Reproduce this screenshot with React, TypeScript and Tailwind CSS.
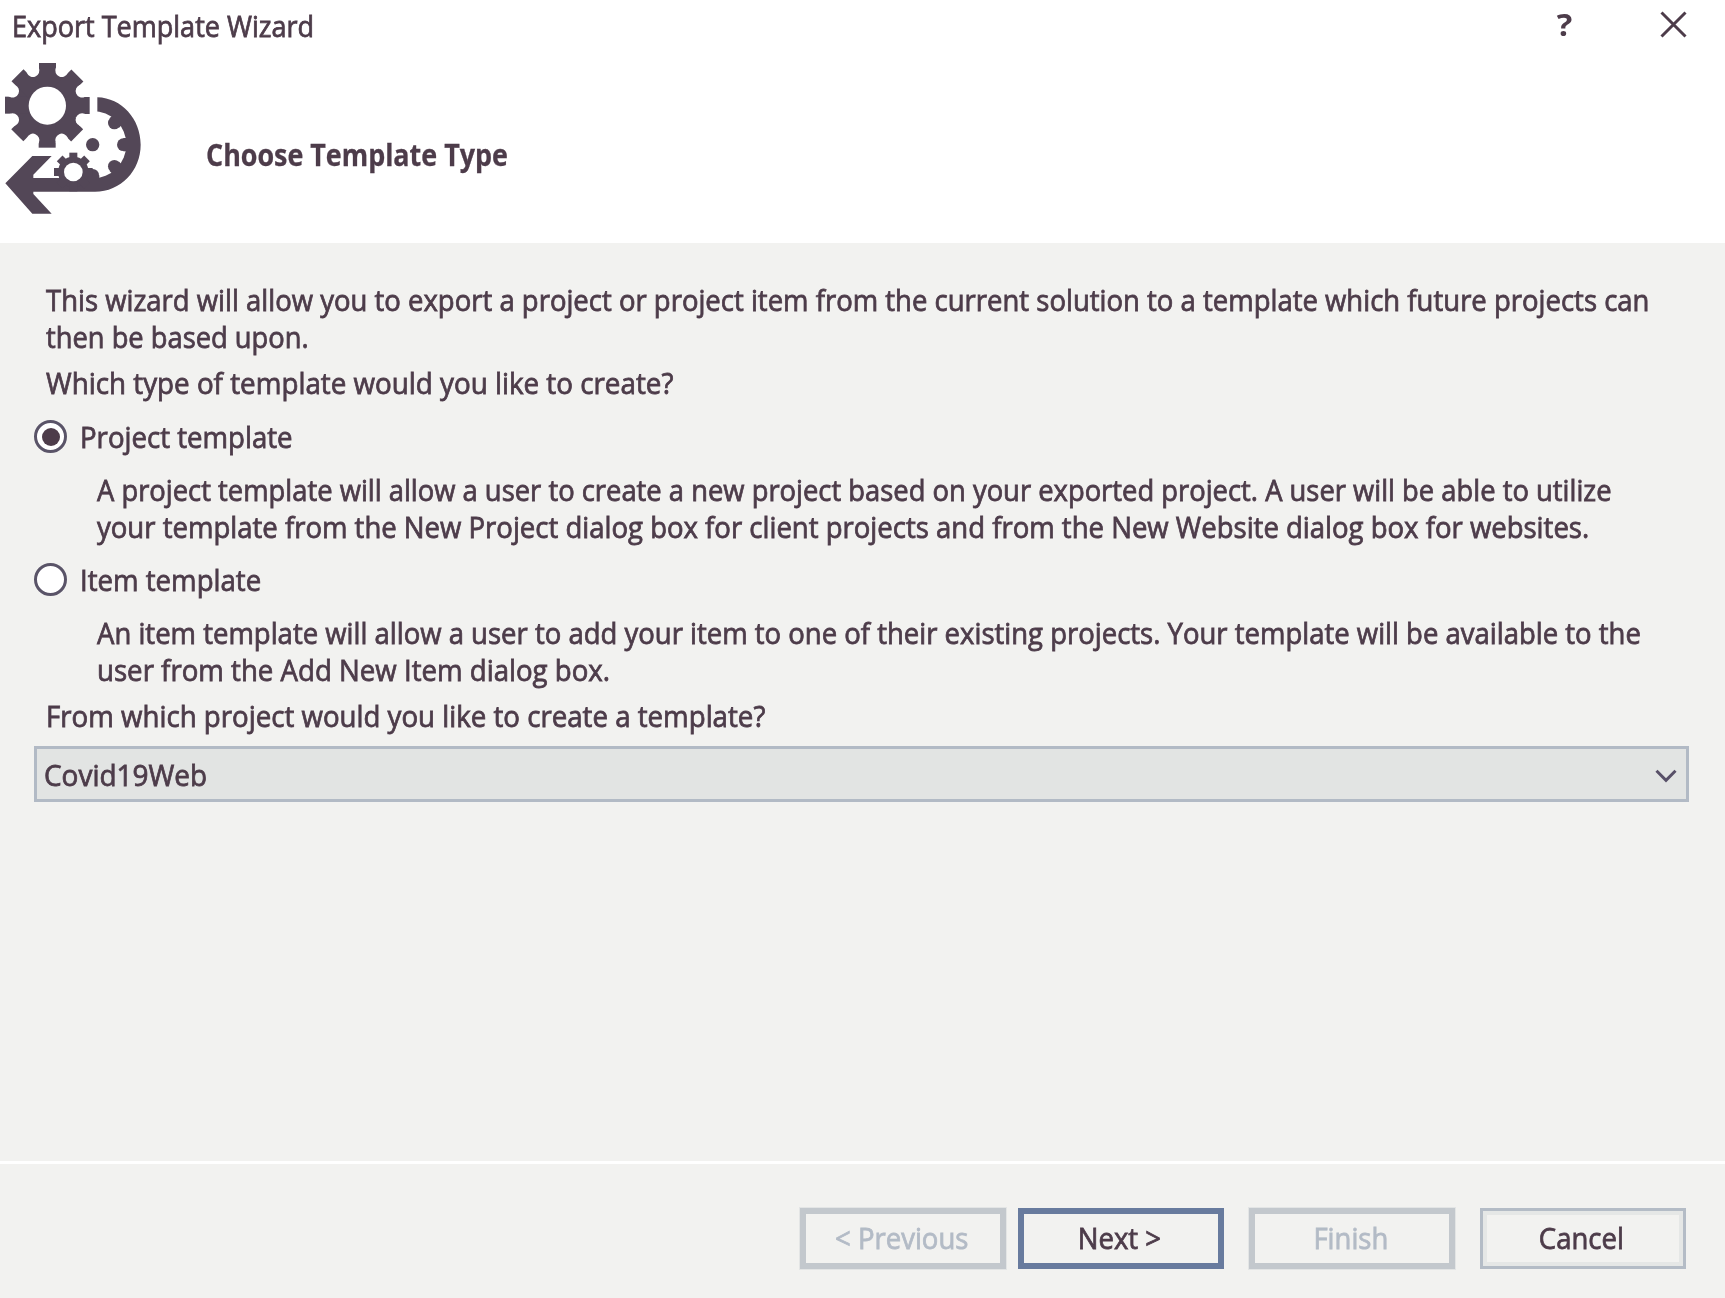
import type { ReactNode } from "react";

const INK = "#4d3c4a";

function Line({ scale = 0.917, bold = false, children }: { scale?: number; bold?: boolean; children: ReactNode }) {
  return (
    <span
      className={
        "block w-max origin-left whitespace-pre text-[30px] leading-9 " +
        (bold ? "font-bold [-webkit-text-stroke:0.3px_currentColor]" : "font-normal [-webkit-text-stroke:0.8px_currentColor]")
      }
      style={{ transform: `scaleX(${scale})` }}
    >
      {children}
    </span>
  );
}

function WizardIcon() {
  const eight = [0, 45, 90, 135, 180, 225, 270, 315];
  return (
    <svg viewBox="0 0 480 525" className="h-[175px] w-[160px] shrink-0" fill="#534757">
      <mask id="big">
        <rect width="480" height="525" fill="#fff" />
        {eight.map((a) => (
          <circle key={a} cx="142" cy="53" r="19.5" fill="#000" transform={`rotate(${a + 22.5} 142 166)`} />
        ))}
        <ellipse cx="142" cy="167" rx="56" ry="57" fill="#000" />
      </mask>
      <mask id="mid">
        <rect width="480" height="525" fill="#fff" />
        <circle cx="278" cy="284" r="101" fill="#000" />
        {[0, 45, 90, -45].map((a) => (
          <g key={a} fill="#fff" transform={`rotate(${a} 278 284)`}>
            <circle cx="370" cy="284" r="19" />
            <rect x="370" y="264" width="16" height="40" />
          </g>
        ))}
        <circle cx="142" cy="166" r="128" fill="#000" />
      </mask>
      <g mask="url(#big)">
        <circle cx="142" cy="166" r="113" />
        {eight.map((a) => (
          <rect key={a} x="117" y="39" width="51" height="70" transform={`rotate(${a} 142 166)`} />
        ))}
      </g>
      <path
        mask="url(#mid)"
        d="M292 142C365 144 422 207 422 284C422 362 362 425 285 425H100V432L155 491H97L16 400L97 318H155L100 374V384H255V350H292Z"
      />
      <circle cx="278" cy="284" r="20" />
      <circle cx="220" cy="366" r="46" />
      {eight.map((a) => (
        <rect key={a} x="208" y="308" width="24" height="30" transform={`rotate(${a} 220 366)`} />
      ))}
      <circle cx="220" cy="366" r="28" fill="#fff" />
    </svg>
  );
}

function Radio({ checked = false }: { checked?: boolean }) {
  return (
    <span className="mt-px flex size-[33px] shrink-0 items-center justify-center rounded-full border-3 border-[#5a5468] bg-white">
      {checked && <span className="size-[18px] rounded-full bg-[#4d3c4a]" />}
    </span>
  );
}

function Option({ label, scale, checked, lines }: { label: string; scale: number; checked?: boolean; lines: [string, number][] }) {
  return (
    <div>
      <div className="flex items-start">
        <Radio checked={checked} />
        <div className="ml-[13px]">
          <Line scale={scale}>{label}</Line>
        </div>
      </div>
      <div className="mt-[17px] ml-[63px] flex flex-col gap-px">
        {lines.map(([t, s]) => (
          <Line key={t} scale={s}>{t}</Line>
        ))}
      </div>
    </div>
  );
}

function Button({ kind, children }: { kind: "disabled" | "default" | "normal"; children: string }) {
  const look = {
    disabled: "border-[6px] border-[#c3c8cd] text-[#b3bbc6] outline outline-1 outline-[#e3e5e5]",
    default: "border-[6px] border-[#687b9e] text-[#4d3c4a]",
    normal: "border-[3px] border-[#b4bcc6] text-[#4d3c4a] shadow-[inset_0_0_0_4px_#e5e7e6]",
  }[kind];
  return (
    <button className={"flex h-[61px] w-[206px] items-center justify-center text-[30px] leading-9 " + look}>
      <span className="mr-[3px] -mt-px block scale-x-[0.917] [-webkit-text-stroke:0.8px_currentColor]">{children}</span>
    </button>
  );
}

export default function App() {
  return (
    <div className="flex h-[1298px] w-[1725px] flex-col overflow-hidden bg-[#f2f2f0] font-['Open_Sans',sans-serif] text-[#4d3c4a]">
      <header className="h-[243px] bg-white">
        <div className="flex h-[50px] items-start justify-between pt-2 pl-3">
          <Line scale={0.901}>Export Template Wizard</Line>
          <div className="flex items-start pr-[38px]">
            <span className="-mt-[2px] mr-[88px] scale-x-[1.05] text-[31px] leading-9 font-bold">?</span>
            <svg viewBox="0 0 27 27" className="mt-[3px] size-[27px]" stroke={INK} strokeWidth="3" fill="none">
              <path d="M1.5 1.5L25.5 25.5M25.5 1.5L1.5 25.5" />
            </svg>
          </div>
        </div>
        <div className="flex">
          <WizardIcon />
          <div className="mt-[87px] ml-[46px]">
            <Line scale={0.896} bold>Choose Template Type</Line>
          </div>
        </div>
      </header>

      <main className="flex h-[918px] flex-col pt-[39px] pr-9 pl-[34px]">
        <div className="ml-3 flex flex-col gap-px">
          <Line scale={0.9165}>This wizard will allow you to export a project or project item from the current solution to a template which future projects can</Line>
          <Line scale={0.91}>then be based upon.</Line>
        </div>
        <div className="mt-2.5 ml-3">
          <Line scale={0.926}>Which type of template would you like to create?</Line>
        </div>
        <div className="mt-[18px]">
          <Option
            checked
            label="Project template"
            scale={0.92}
            lines={[
              ["A project template will allow a user to create a new project based on your exported project. A user will be able to utilize", 0.9125],
              ["your template from the New Project dialog box for client projects and from the New Website dialog box for websites.", 0.9175],
            ]}
          />
        </div>
        <div className="mt-[17px]">
          <Option
            label="Item template"
            scale={0.92}
            lines={[
              ["An item template will allow a user to add your item to one of their existing projects. Your template will be available to the", 0.9165],
              ["user from the Add New Item dialog box.", 0.921],
            ]}
          />
        </div>
        <div className="mt-2.5 ml-3">
          <Line scale={0.922}>From which project would you like to create a template?</Line>
        </div>
        <div className="mt-3 flex h-[56px] w-[1655px] items-center justify-between border-[3px] border-[#b2bac5] bg-[#e2e4e3] pr-[9px] pl-[7px]">
          <div className="pt-px">
            <Line scale={0.932}>Covid19Web</Line>
          </div>
          <svg viewBox="0 0 22 14" className="mt-[3px] h-[14px] w-[22px]" stroke="#585068" strokeWidth="3" fill="none">
            <path d="M1.5 1.8L11 11.3L20.5 1.8" />
          </svg>
        </div>
      </main>

      <footer className="flex h-[137px] border-t-3 border-white pt-[44px] pl-[800px]">
        <Button kind="disabled">{"< Previous"}</Button>
        <div className="ml-3"><Button kind="default">{"Next >"}</Button></div>
        <div className="ml-[25px]"><Button kind="disabled">Finish</Button></div>
        <div className="ml-[25px]"><Button kind="normal">Cancel</Button></div>
      </footer>
    </div>
  );
}
